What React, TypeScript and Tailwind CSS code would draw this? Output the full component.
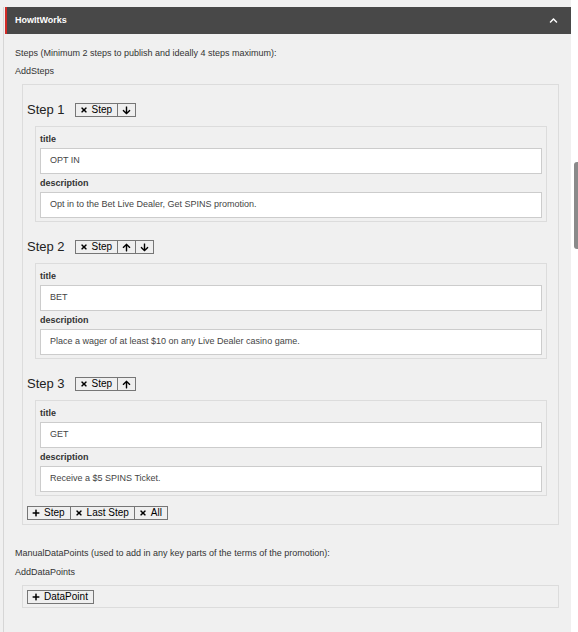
import { FaTimes, FaArrowUp, FaArrowDown, FaPlus, FaChevronUp } from "react-icons/fa";

type Step = { title: string; description: string; up: boolean; down: boolean };

const steps: Step[] = [
  { title: "OPT IN", description: "Opt in to the Bet Live Dealer, Get SPINS promotion.", up: false, down: true },
  { title: "BET", description: "Place a wager of at least $10 on any Live Dealer casino game.", up: true, down: true },
  { title: "GET", description: "Receive a $5 SPINS Ticket.", up: true, down: false },
];

function Btn({ children, icon = false }: { children: React.ReactNode; icon?: boolean }) {
  return (
    <button
      className={
        "h-[14px] -ml-px first:ml-0 flex items-center gap-[4px] border border-[#767676] bg-[#efefef] text-[10px] leading-none text-black " +
        (icon ? "px-[4px]" : "pl-[4px] pr-[5px]")
      }
    >
      {children}
    </button>
  );
}

function Field({ label, value }: { label: string; value: string }) {
  return (
    <div>
      <div className="text-[9px] leading-[13px] font-bold text-[#333]">{label}</div>
      <div className="mt-[2px] h-[26px] flex items-center pl-[9px] bg-white border border-[#cccccc] text-[9px] text-[#444]">
        {value}
      </div>
    </div>
  );
}

export default function App() {
  return (
    <div className="flex min-h-screen bg-white text-[#333] font-['Liberation_Sans',Arial,sans-serif]">
      <div className="w-[571px] bg-[#f0f0f0] pt-[7px] pl-[3px]">
        <div className="border-l border-[#d6d6d6] min-h-[625px]">
          {/* Header */}
          <div className="ml-px h-[27px] flex items-center justify-between pl-[8px] pr-[13px] bg-[#484848] border-l-2 border-[#d12a26]">
            <span className="text-white text-[9px] font-bold">HowItWorks</span>
            <FaChevronUp className="text-white w-[9px] h-[9px]" />
          </div>

          <div className="pl-[11px] pr-[12px]">
            <div className="mt-[13px] text-[9px] leading-[13px]">Steps (Minimum 2 steps to publish and ideally 4 steps maximum):</div>
            <div className="mt-[5px] text-[9px] leading-[13px]">AddSteps</div>

            {/* AddSteps box */}
            <div className="mt-[6px] ml-[7px] border border-[#dcdcdc] pl-[4px] pt-[16px] pb-[4px]">
              {steps.map((s, i) => (
                <div key={s.title} className={i > 0 ? "mt-[16px]" : ""}>
                  <div className="h-[18px] flex items-center">
                    <span className="text-[13px] leading-[18px] text-[#222]">Step {i + 1}</span>
                    <div className="ml-[10px] flex">
                      <Btn>
                        <FaTimes className="w-[8px] h-[8px]" />
                        Step
                      </Btn>
                      {s.up && (
                        <Btn icon>
                          <FaArrowUp className="w-[9px] h-[9px]" />
                        </Btn>
                      )}
                      {s.down && (
                        <Btn icon>
                          <FaArrowDown className="w-[9px] h-[9px]" />
                        </Btn>
                      )}
                    </div>
                  </div>
                  <div className="mt-[7px] ml-[8px] mr-[11px] border border-[#dcdcdc] px-[4px] pt-[6px] pb-[3px] flex flex-col gap-[3px]">
                    <Field label="title" value={s.title} />
                    <Field label="description" value={s.description} />
                  </div>
                </div>
              ))}
              <div className="mt-[10px] flex">
                <Btn>
                  <FaPlus className="w-[8px] h-[8px]" />
                  Step
                </Btn>
                <Btn>
                  <FaTimes className="w-[8px] h-[8px]" />
                  Last Step
                </Btn>
                <Btn>
                  <FaTimes className="w-[8px] h-[8px]" />
                  All
                </Btn>
              </div>
            </div>

            <div className="mt-[22px] text-[9px] leading-[13px]">ManualDataPoints (used to add in any key parts of the terms of the promotion):</div>
            <div className="mt-[6px] text-[9px] leading-[13px]">AddDataPoints</div>
            <div className="mt-[6px] ml-[7px] border border-[#dcdcdc] pl-[4px] pt-[4px] pb-[2px] flex">
              <div className="h-[15px] flex">
                <Btn>
                  <FaPlus className="w-[8px] h-[8px]" />
                  DataPoint
                </Btn>
              </div>
            </div>
          </div>
        </div>
      </div>
      <div className="flex-1 bg-white">
        <div className="mt-[162px] ml-[3px] h-[87px] rounded-l-[3px] bg-[#8a8a8a]" />
      </div>
    </div>
  );
}
